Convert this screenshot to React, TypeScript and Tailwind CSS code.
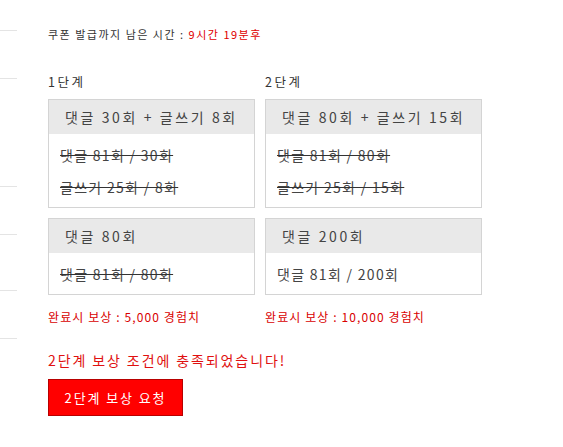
const font = { fontFamily: '"Noto Sans CJK KR", "Noto Sans", sans-serif' };

type Stage = {
  label: string;
  width: string;
  goals: { title: string; rows: { text: string; done: boolean }[] }[];
  reward: string;
};

const stages: Stage[] = [
  {
    label: "1단계",
    width: "w-[207px]",
    goals: [
      {
        title: "댓글 30회 + 글쓰기 8회",
        rows: [
          { text: "댓글 81회 / 30회", done: true },
          { text: "글쓰기 25회 / 8회", done: true },
        ],
      },
      {
        title: "댓글 80회",
        rows: [{ text: "댓글 81회 / 80회", done: true }],
      },
    ],
    reward: "완료시 보상 : 5,000 경험치",
  },
  {
    label: "2단계",
    width: "w-[217px]",
    goals: [
      {
        title: "댓글 80회 + 글쓰기 15회",
        rows: [
          { text: "댓글 81회 / 80회", done: true },
          { text: "글쓰기 25회 / 15회", done: true },
        ],
      },
      {
        title: "댓글 200회",
        rows: [{ text: "댓글 81회 / 200회", done: false }],
      },
    ],
    reward: "완료시 보상 : 10,000 경험치",
  },
];

function Sidebar() {
  const rows = ["h-[31px]", "h-[48px]", "h-[108px]", "h-[48px]", "h-[56px]", "h-[48px]"];
  return (
    <div className="w-[17px] shrink-0">
      {rows.map((h, i) => (
        <div key={i} className={`${h} border-b border-[#e4e4e4]`} />
      ))}
    </div>
  );
}

export default function App() {
  return (
    <div className="flex bg-white w-[563px] h-[447px] text-[#333]" style={font}>
      <Sidebar />
      <div className="pl-[31px] pt-[25px]">
        <p className="text-[11px] tracking-[1.5px] leading-[18px]">
          쿠폰 발급까지 남은 시간 : <span className="text-[#e00000]">9시간 19분후</span>
        </p>

        <div className="flex gap-[10px] mt-[31px]">
          {stages.map((s) => (
            <div key={s.label} className={s.width}>
              <div className="text-[12.5px] leading-[16px] tracking-[2.5px] mb-[9px]">{s.label}</div>
              <div className="flex flex-col gap-[10px]">
                {s.goals.map((g) => (
                  <div key={g.title} className="border border-[#d4d4d4]">
                    <div className="h-[34px] bg-[#e9e9e9] pl-[16px] flex items-center text-[14px] tracking-[2.6px] text-[#444]">
                      {g.title}
                    </div>
                    <div className="pt-[5px] pb-[4px] pl-[11px]">
                      {g.rows.map((r) => (
                        <div
                          key={r.text}
                          className={`h-[32px] flex items-center text-[14px] tracking-[1.3px] text-[#444] ${r.done ? "line-through decoration-[#333]" : ""}`}
                        >
                          {r.text}
                        </div>
                      ))}
                    </div>
                  </div>
                ))}
              </div>
              <div className="mt-[14px] text-[12px] tracking-[1.1px] leading-[16px] text-[#d90000]">{s.reward}</div>
            </div>
          ))}
        </div>

        <p className="mt-[25px] text-[14px] tracking-[1.9px] leading-[20px] text-[#e01010]">
          2단계 보상 조건에 충족되었습니다!
        </p>
        <button
          className="mt-[9px] w-[135px] h-[37px] bg-[#ff0000] border border-[#b80000] text-white text-[13px] tracking-[1.9px] flex items-center justify-center"
          style={font}
        >
          2단계 보상 요청
        </button>
      </div>
    </div>
  );
}
